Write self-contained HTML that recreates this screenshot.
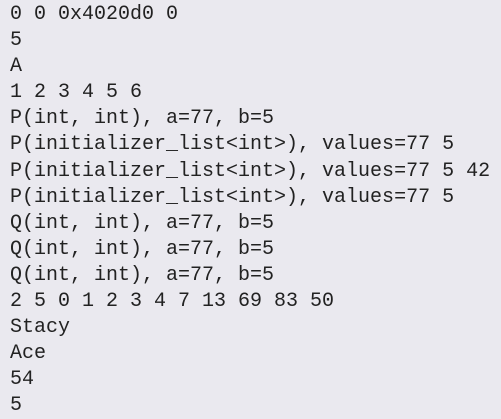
<!DOCTYPE html>
<html><head><style>
html,body{margin:0;padding:0;background:#eae9ef;width:501px;height:419px;overflow:hidden}
pre{margin:0;padding:2px 0 0 10px;font-family:"Liberation Mono",monospace;font-size:20px;line-height:26.1px;color:#222}
</style></head><body><pre>0 0 0x4020d0 0
5
A
1 2 3 4 5 6
P(int, int), a=77, b=5
P(initializer_list&lt;int&gt;), values=77 5
P(initializer_list&lt;int&gt;), values=77 5 42
P(initializer_list&lt;int&gt;), values=77 5
Q(int, int), a=77, b=5
Q(int, int), a=77, b=5
Q(int, int), a=77, b=5
2 5 0 1 2 3 4 7 13 69 83 50
Stacy
Ace
54
5</pre></body></html>
